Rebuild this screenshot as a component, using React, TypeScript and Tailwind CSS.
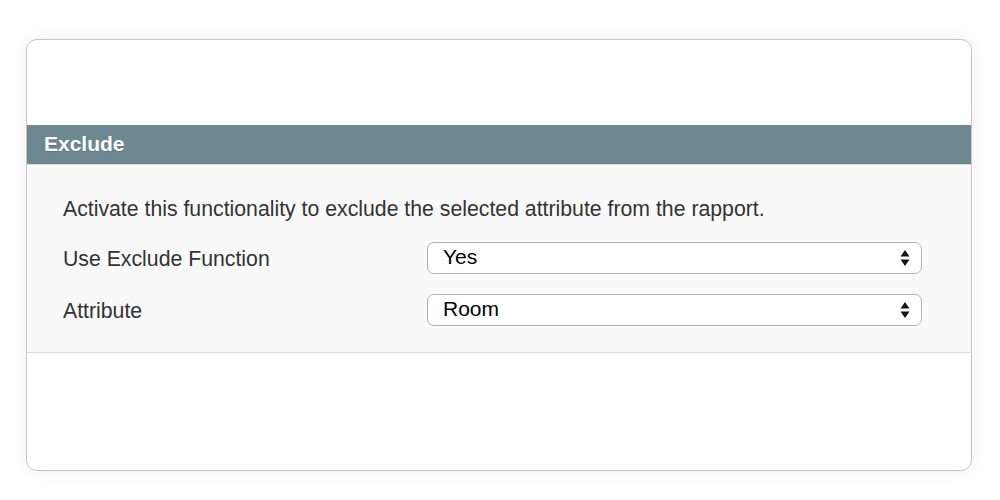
import { useState } from 'react'

function Arrows() {
  return (
    <svg width="10" height="18" viewBox="0 0 10 18" aria-hidden className="shrink-0">
      <path d="M5 1 L9.5 7.5 H0.5 Z" fill="#111" />
      <path d="M5 17 L9.5 10.5 H0.5 Z" fill="#111" />
    </svg>
  )
}

function SelectBox({ value, options, onChange }: { value: string; options: string[]; onChange: (v: string) => void }) {
  return (
    <div className="relative h-[32px] w-[495px] rounded-[7px] border border-[#b3b3b3] bg-white">
      <select
        value={value}
        onChange={(e) => onChange(e.target.value)}
        className="h-full w-full appearance-none bg-transparent pl-[15px] pr-8 pb-[3px] text-[21px] leading-[24px] text-black outline-none"
      >
        {options.map((o) => (
          <option key={o}>{o}</option>
        ))}
      </select>
      <div className="pointer-events-none absolute right-[11px] top-[6px]">
        <Arrows />
      </div>
    </div>
  )
}

export default function App() {
  const [useExclude, setUseExclude] = useState('Yes')
  const [attribute, setAttribute] = useState('Room')

  return (
    <div className="h-[500px] w-[1000px] bg-white pt-[39px] pl-[26px] font-['Liberation_Sans',Arial,sans-serif]">
      <div className="flex h-[432px] w-[946px] flex-col overflow-hidden rounded-[11px] border border-[#c6c6c6] bg-white shadow-[0_0_20px_rgba(0,0,0,0.07)]">
        <div className="h-[85px] shrink-0" />
        <div className="flex h-[39px] shrink-0 items-center bg-[#6e8891] pl-[17px] pb-[1px] text-[21px] leading-[24px] font-bold text-white [text-shadow:0_1px_1px_rgba(0,0,0,0.15)]">
          Exclude
        </div>
        <div className="flex shrink-0 flex-col border-t border-b border-[#dcdcdc] bg-[#f9f9f9] pt-[33px] pb-[26px] pl-[36px] text-[#333]">
          <p className="text-[21.25px] leading-[22px]">
            Activate this functionality to exclude the selected attribute from the rapport.
          </p>
          <div className="mt-[22px] flex flex-col gap-[20px]">
            <div className="flex items-center">
              <span className="w-[364px] pt-[2px] text-[21.25px] leading-[24px]">Use Exclude Function</span>
              <SelectBox value={useExclude} options={['Yes', 'No']} onChange={setUseExclude} />
            </div>
            <div className="flex items-center">
              <span className="w-[364px] pt-[2px] text-[21.25px] leading-[24px]">Attribute</span>
              <SelectBox value={attribute} options={['Room', 'Floor', 'Building']} onChange={setAttribute} />
            </div>
          </div>
        </div>
        <div className="flex-1" />
      </div>
    </div>
  )
}
